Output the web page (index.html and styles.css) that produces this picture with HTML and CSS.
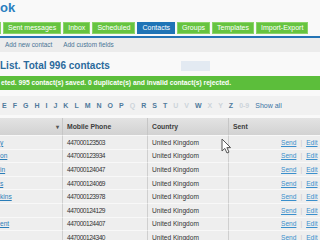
FILE: index.html
```html
<!DOCTYPE html>
<html lang="en">

<head>
    <meta charset="utf-8">
    <meta name="viewport" content="width=device-width, initial-scale=1.0">
    <title>Contacts</title>
    <link rel="stylesheet" href="styles.css">
</head>

<body>
    <div class="page">
        <!-- logo, only the tail of it is in view -->
        <div class="brand">ok</div>

        <nav class="tabs">
            <a class="tab stub"></a>
            <a class="tab">Sent messages</a>
            <a class="tab">Inbox</a>
            <a class="tab">Scheduled</a>
            <a class="tab valgt">Contacts</a>
            <a class="tab">Groups</a>
            <a class="tab">Templates</a>
            <a class="tab">Import-Export</a>
        </nav>

        <div class="subnav">
            <a>Add new contact</a>
            <a>Add custom fields</a>
        </div>

        <div class="heading-row">
            <h1>List. Total 996 contacts</h1>
            <span class="search-box"></span>
        </div>

        <div class="notice">eted. 995 contact(s) saved. 0 duplicate(s) and invalid contact(s) rejected.</div>

        <div class="letters">
            <a>E</a><a>F</a><a>G</a><a>H</a><a>I</a><a>J</a><a>K</a><a>L</a><a>M</a><a>N</a><a>O</a><a>P</a>
            <a class="off">Q</a><a>R</a><a>S</a><a>T</a><a class="off">U</a><a class="off">V</a><a>W</a>
            <a class="off">X</a><a class="off">Y</a><a>Z</a><a class="off">0-9</a>
            <a class="show-all">Show all</a>
        </div>

        <table class="contacts">
            <thead>
                <tr>
                    <th class="c-name"><span class="sort">&#9662;</span></th>
                    <th class="c-phone">Mobile Phone</th>
                    <th class="c-country">Country</th>
                    <th class="c-sent">Sent</th>
                    <th class="c-actions"></th>
                </tr>
            </thead>
            <tbody>
                <tr>
                    <td class="c-name"><a>y</a></td>
                    <td class="phone">447000123503</td>
                    <td>United Kingdom</td>
                    <td class="c-sent"></td>
                    <td class="c-actions"><a>Send</a><span class="sep">|</span><a>Edit</a></td>
                </tr>
                <tr>
                    <td class="c-name"><a>on</a></td>
                    <td class="phone">447000123934</td>
                    <td>United Kingdom</td>
                    <td class="c-sent"></td>
                    <td class="c-actions"><a>Send</a><span class="sep">|</span><a>Edit</a></td>
                </tr>
                <tr>
                    <td class="c-name"><a>in</a></td>
                    <td class="phone">447000124047</td>
                    <td>United Kingdom</td>
                    <td class="c-sent"></td>
                    <td class="c-actions"><a>Send</a><span class="sep">|</span><a>Edit</a></td>
                </tr>
                <tr>
                    <td class="c-name"><a>s</a></td>
                    <td class="phone">447000124069</td>
                    <td>United Kingdom</td>
                    <td class="c-sent"></td>
                    <td class="c-actions"><a>Send</a><span class="sep">|</span><a>Edit</a></td>
                </tr>
                <tr>
                    <td class="c-name"><a>kins</a></td>
                    <td class="phone">447000123978</td>
                    <td>United Kingdom</td>
                    <td class="c-sent"></td>
                    <td class="c-actions"><a>Send</a><span class="sep">|</span><a>Edit</a></td>
                </tr>
                <tr>
                    <td class="c-name"></td>
                    <td class="phone">447000124129</td>
                    <td>United Kingdom</td>
                    <td class="c-sent"></td>
                    <td class="c-actions"><a>Send</a><span class="sep">|</span><a>Edit</a></td>
                </tr>
                <tr>
                    <td class="c-name"><a>ent</a></td>
                    <td class="phone">447000124407</td>
                    <td>United Kingdom</td>
                    <td class="c-sent"></td>
                    <td class="c-actions"><a>Send</a><span class="sep">|</span><a>Edit</a></td>
                </tr>
                <tr>
                    <td class="c-name"></td>
                    <td class="phone">447000124340</td>
                    <td>United Kingdom</td>
                    <td class="c-sent"></td>
                    <td class="c-actions"><a>Send</a><span class="sep">|</span><a>Edit</a></td>
                </tr>
            </tbody>
        </table>

        <!-- mouse pointer hovering the first row -->
        <svg class="cursor" width="11" height="16" viewBox="0 0 11 16">
            <path d="M1 1 L1 13 L3.8 10.4 L6 15 L8 14.1 L5.9 9.6 L9.6 9.6 Z" fill="#fff" stroke="#555" stroke-width="1" stroke-linejoin="round"/>
        </svg>
    </div>
</body>

</html>
```

FILE: styles.css
```css
* {
    box-sizing: border-box;
}

body {
    margin: 0;
    width: 320px;
    height: 240px;
    overflow: hidden;
    background-color: #f9f9f9;
    font-family: "Liberation Sans", Arial, sans-serif;
    color: #333333;
}

.page {
    position: relative;
    width: 320px;
    height: 240px;
}

.brand {
    height: 22px;
    line-height: 16px;
    font-size: 13px;
    font-weight: bold;
    color: #2a7fbf;
}

/* tabs */
.tabs {
    display: flex;
    gap: 2px;
    padding-bottom: 2px;
    border-bottom: 2px solid #2474b5;
}

.tab {
    height: 12px;
    line-height: 12px;
    padding: 0 5px;
    font-size: 7px;
    color: #ffffff;
    white-space: nowrap;
    background-color: #66c440;
    box-shadow: inset 0 0 0 1px #8ad468;
}

.tab.stub {
    width: 1px;
    padding: 0;
}

.tab.valgt {
    background-color: #1f74b6;
    box-shadow: none;
}

.subnav {
    display: flex;
    gap: 11px;
    height: 14px;
    line-height: 14px;
    padding-left: 5px;
    font-size: 6.4px;
    background-color: #ececec;
    color: #4a7596;
}

.heading-row {
    display: flex;
    align-items: center;
    margin-top: 6px;
    height: 15px;
}

.heading-row h1 {
    margin: 0;
    font-size: 10px;
    line-height: 15px;
    color: #2b6a9c;
}

.search-box {
    width: 29px;
    height: 10px;
    margin-left: 71px;
    background-color: #e3eaf2;
}

.notice {
    margin-top: 3px;
    height: 14px;
    line-height: 14px;
    padding-left: 1px;
    font-size: 6.7px;
    font-weight: bold;
    color: #ffffff;
    white-space: nowrap;
    background-color: #5cbe3b;
}

.letters {
    display: flex;
    gap: 6px;
    margin-top: 6px;
    height: 19px;
    line-height: 19px;
    padding-left: 2px;
    font-size: 7px;
    font-weight: bold;
    color: #4f7a9c;
    background-color: #f1f1f1;
}

.letters .off {
    color: #cdd4da;
}

.letters .show-all {
    font-weight: normal;
    color: #3c73a4;
}

/* contact table */
.contacts {
    margin-top: 3px;
    width: 352px;
    table-layout: fixed;
    border-spacing: 0;
    font-size: 6.6px;
}

.contacts th {
    height: 17px;
    padding: 0 4px;
    text-align: left;
    font-size: 6.8px;
    color: #3d3d3d;
    background: linear-gradient(#e3e3e3, #d2d2d2);
    border-left: 1px solid #c6c6c6;
}

.contacts td {
    height: 13.6px;
    padding: 0 4px;
    background-color: #eeeeee;
    border-left: 1px solid #cfcfcf;
    border-top: 1px solid #f8f8f8;
    white-space: nowrap;
}

.contacts td.phone {
    letter-spacing: -0.5px;
}

.contacts .c-name {
    width: 62px;
    padding: 0;
    border-left: none;
}

.contacts th.c-name {
    text-align: right;
    padding-right: 3px;
}

.sort {
    font-size: 6px;
    color: #555555;
}

.c-phone {
    width: 85px;
}

.c-country {
    width: 81px;
}

.contacts .c-sent {
    width: 44px;
}

.contacts .c-actions {
    width: 80px;
    padding-left: 9px;
    border-left: none;
}

.c-name a {
    color: #2a7db8;
    text-decoration: underline;
}

.c-actions a {
    color: #3a8fcc;
    text-decoration: underline;
}

.sep {
    margin: 0 4px;
    color: #c8c8c8;
}

.cursor {
    position: absolute;
    left: 221px;
    top: 138px;
}
```
